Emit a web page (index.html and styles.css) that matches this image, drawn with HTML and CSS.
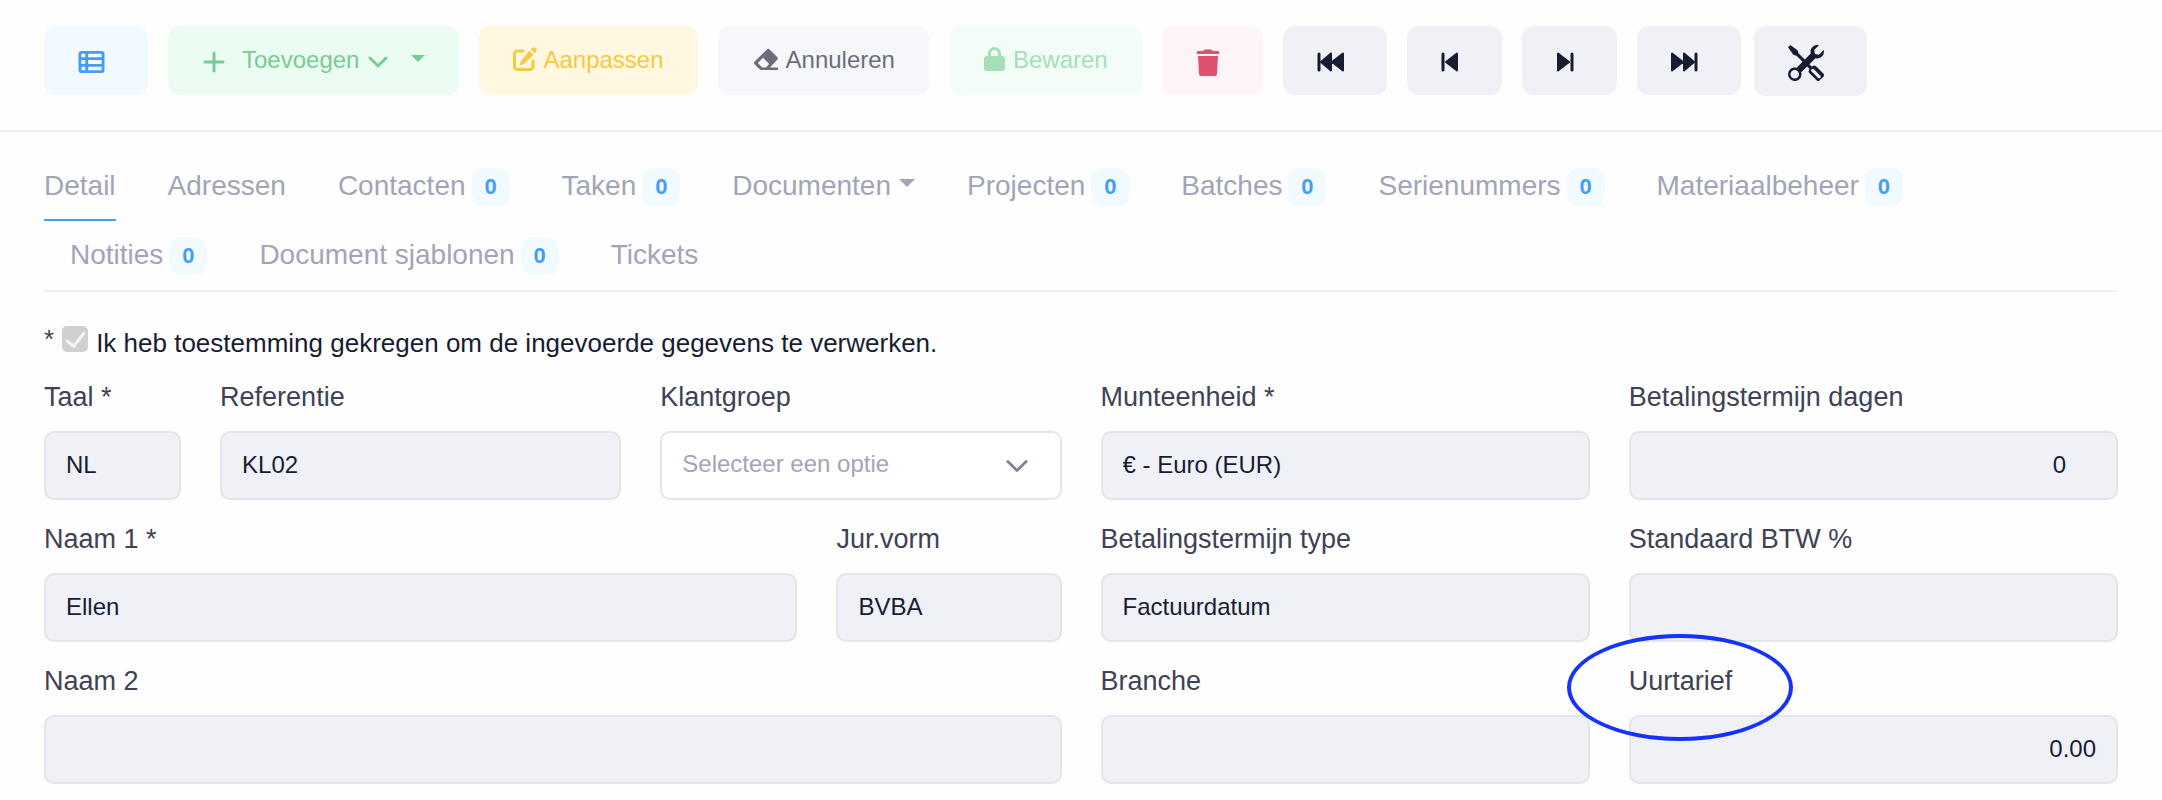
FILE: index.html
```html
<!DOCTYPE html>
<html lang="nl">
<head>
    <meta charset="UTF-8">
    <meta name="viewport" content="width=device-width, initial-scale=1.0">
    <title>Klant KL02</title>
    <link rel="stylesheet" href="styles.css">
</head>
<body>
    <header class="toolbar">
        <button type="button" class="btn btn-info" aria-label="Lijst">
            <svg class="icon icon-list" viewBox="0 0 28 24" fill="none" stroke="currentColor" stroke-width="3"><rect x="2" y="2" width="24" height="20" rx="2"/><path d="M2 8.500h24M2 15.500h24M9 2v20"/></svg>
        </button>
        <button type="button" class="btn btn-add">
            <svg class="icon icon-plus" viewBox="0 0 24 24" fill="none" stroke="currentColor" stroke-width="3" stroke-linecap="round"><path d="M12 3v18M3 12h18"/></svg>
            <span>Toevoegen</span>
            <svg class="icon icon-down" viewBox="0 0 20 14" fill="none" stroke="currentColor" stroke-width="3" stroke-linecap="round"><path d="M2 3l8 8 8-8"/></svg>
            <span class="caret"></span>
        </button>
        <button type="button" class="btn btn-edit">
            <svg class="icon icon-text" viewBox="0 0 24 24"><path fill="none" stroke="currentColor" stroke-width="3" stroke-linecap="round" d="M10 4H4.500A3 3 0 0 0 1.500 7v12.500a3 3 0 0 0 3 3H17a3 3 0 0 0 3-3V14"/><path fill="currentColor" d="M16.500 3.500l4 4-9 9q-2 1.500-4.800 1.800.3-2.800 1.800-4.800zM17.700 2.300l1-1a2.700 2.700 0 0 1 4 4l-1 1z"/></svg>
            <span>Aanpassen</span>
        </button>
        <button type="button" class="btn btn-cancel">
            <svg class="icon icon-text icon-eraser" viewBox="-2 0 28 24"><path fill="currentColor" fill-rule="evenodd" d="M12.800 2.400a2 2 0 0 1 2.800 0l7.600 7.600a2 2 0 0 1 0 2.800L16 20.500h7a1.200 1.200 0 0 1 0 2.500H7.500a3 3 0 0 1-2.100-.9L.7 17.400a2 2 0 0 1 0-2.800zM9 10.800l-5.200 5.200 4.500 4.500h3.600l3.300-3.500z"/></svg>
            <span>Annuleren</span>
        </button>
        <button type="button" class="btn btn-save" disabled>
            <svg class="icon icon-text" viewBox="0 0 24 24"><path fill="none" stroke="currentColor" stroke-width="3" d="M6.500 10V6.500a5 5 0 0 1 10 0V10"/><rect x="1" y="9" width="21" height="15" rx="3" fill="currentColor"/></svg>
            <span>Bewaren</span>
        </button>
        <button type="button" class="btn btn-delete" aria-label="Verwijderen">
            <svg class="icon icon-trash" viewBox="0 0 24 27" fill="currentColor"><path d="M2 2h5l1.500-1.500h7L17 2h5a1.500 1.500 0 0 1 0 3H2A1.500 1.500 0 0 1 2 2zM2 7h20l-1 17.500a2.500 2.500 0 0 1-2.500 2.500h-13A2.500 2.500 0 0 1 3 24.500z"/></svg>
        </button>
        <button type="button" class="btn btn-light" aria-label="Eerste">
            <svg class="icon icon-skip-2" viewBox="0 0 27 20"><path fill="currentColor" stroke="currentColor" stroke-width="2" stroke-linejoin="round" d="M14 1.500v17L4 10zM26 1.500v17L15 10z"/><path stroke="currentColor" stroke-width="3" stroke-linecap="round" d="M2 2v16"/></svg>
        </button>
        <button type="button" class="btn btn-light" aria-label="Vorige">
            <svg class="icon icon-skip-1" viewBox="0 0 18 20"><path fill="currentColor" stroke="currentColor" stroke-width="2" stroke-linejoin="round" d="M16 1.500v17L5 10z"/><path stroke="currentColor" stroke-width="3" stroke-linecap="round" d="M2 2v16"/></svg>
        </button>
        <button type="button" class="btn btn-light" aria-label="Volgende">
            <svg class="icon icon-skip-1" viewBox="0 0 18 20"><path fill="currentColor" stroke="currentColor" stroke-width="2" stroke-linejoin="round" d="M2 1.500v17L13 10z"/><path stroke="currentColor" stroke-width="3" stroke-linecap="round" d="M16 2v16"/></svg>
        </button>
        <button type="button" class="btn btn-light" aria-label="Laatste">
            <svg class="icon icon-skip-2" viewBox="0 0 27 20"><path fill="currentColor" stroke="currentColor" stroke-width="2" stroke-linejoin="round" d="M1 1.500v17L12 10zM13 1.500v17L23 10z"/><path stroke="currentColor" stroke-width="3" stroke-linecap="round" d="M25 2v16"/></svg>
        </button>
        <button type="button" class="btn btn-light btn-tools" aria-label="Extra">
            <svg class="icon icon-tools" viewBox="0 0 16 16" fill="currentColor"><path fill-rule="evenodd" d="M1 0 0 1l2.200 3.081a1 1 0 0 0 .815.419h.07a1 1 0 0 1 .708.293l2.675 2.675-2.617 2.654A3.003 3.003 0 0 0 0 13a3 3 0 1 0 5.878-.851l2.654-2.617.968.968-.305.914a1 1 0 0 0 .242 1.023l3.270 3.270a.997.997 0 0 0 1.414 0l1.586-1.586a.997.997 0 0 0 0-1.414l-3.270-3.270a1 1 0 0 0-1.023-.242L10.500 9.500l-.96-.96 2.680-2.643A3.005 3.005 0 0 0 16 3q0-.405-.102-.777l-2.140 2.141L12 4l-.364-1.757L13.777.102a3 3 0 0 0-3.675 3.680L7.462 6.460 4.793 3.793a1 1 0 0 1-.293-.707v-.071a1 1 0 0 0-.419-.814zM10.500 10.800a.7.7 0 0 1 1 0l2.800 2.800a.7.7 0 0 1-1 1l-2.800-2.800a.7.7 0 0 1 0-1zM3 11.100a1.900 1.900 0 1 1 0 3.800a1.900 1.900 0 1 1 0-3.800z"/><path stroke="currentColor" stroke-width="2" d="M5 11l6-6"/></svg>
        </button>
    </header>

    <main class="content">
        <nav>
            <ul class="tabs">
                <li><a href="#detail" class="active">Detail</a></li>
                <li><a href="#adressen">Adressen</a></li>
                <li><a href="#contacten">Contacten <span class="badge">0</span></a></li>
                <li><a href="#taken">Taken <span class="badge">0</span></a></li>
                <li><a href="#documenten">Documenten <span class="caret"></span></a></li>
                <li><a href="#projecten">Projecten <span class="badge">0</span></a></li>
                <li><a href="#batches">Batches <span class="badge">0</span></a></li>
                <li><a href="#serienummers">Serienummers <span class="badge">0</span></a></li>
                <li><a href="#materiaalbeheer">Materiaalbeheer <span class="badge">0</span></a></li>
                <li><a href="#notities">Notities <span class="badge">0</span></a></li>
                <li><a href="#sjablonen">Document sjablonen <span class="badge">0</span></a></li>
                <li><a href="#tickets">Tickets</a></li>
            </ul>
        </nav>

        <form>
            <div class="consent">
                <span class="required">*</span>
                <input type="checkbox" id="consent" checked disabled>
                <label for="consent">Ik heb toestemming gekregen om de ingevoerde gegevens te verwerken.</label>
            </div>

            <div class="fields">
                <div class="field span-2">
                    <label for="taal">Taal *</label>
                    <input type="text" id="taal" value="NL" disabled>
                </div>
                <div class="field span-5">
                    <label for="referentie">Referentie</label>
                    <input type="text" id="referentie" value="KL02" disabled>
                </div>
                <div class="field span-5">
                    <label for="klantgroep">Klantgroep</label>
                    <div class="select-wrap">
                        <select id="klantgroep">
                            <option>Selecteer een optie</option>
                        </select>
                        <svg class="select-arrow" viewBox="0 0 24 14" fill="none" stroke="currentColor" stroke-width="3" stroke-linecap="round" stroke-linejoin="round"><path d="M2 2l10 10L22 2"/></svg>
                    </div>
                </div>
                <div class="field span-6">
                    <label for="munteenheid">Munteenheid *</label>
                    <input type="text" id="munteenheid" value="€ - Euro (EUR)" disabled>
                </div>
                <div class="field span-6">
                    <label for="dagen">Betalingstermijn dagen</label>
                    <input type="text" id="dagen" class="number days" value="0" disabled>
                </div>

                <div class="field span-9">
                    <label for="naam1">Naam 1 *</label>
                    <input type="text" id="naam1" value="Ellen" disabled>
                </div>
                <div class="field span-3">
                    <label for="jurvorm">Jur.vorm</label>
                    <input type="text" id="jurvorm" value="BVBA" disabled>
                </div>
                <div class="field span-6">
                    <label for="termijntype">Betalingstermijn type</label>
                    <input type="text" id="termijntype" value="Factuurdatum" disabled>
                </div>
                <div class="field span-6">
                    <label for="btw">Standaard BTW %</label>
                    <input type="text" id="btw" disabled>
                </div>

                <div class="field span-12">
                    <label for="naam2">Naam 2</label>
                    <input type="text" id="naam2" disabled>
                </div>
                <div class="field span-6">
                    <label for="branche">Branche</label>
                    <input type="text" id="branche" disabled>
                </div>
                <div class="field span-6 marked">
                    <label for="uurtarief">Uurtarief</label>
                    <input type="text" id="uurtarief" class="number" value="0.00" disabled>
                </div>
            </div>
        </form>
    </main>
</body>
</html>
```
FILE: styles.css
```css
:root {
    --text-color: #181c32;
    --label-color: #3f4254;
    --muted-color: #a1a5b7;
    --primary-color: #459ef5;
    --primary-light: #f1faff;
    --field-color: #eff1f6;
    --border-color: #e2e5ec;
}

*, *::before, *::after {
    box-sizing: border-box;
}

body {
    margin: 0;
    background: #fefefe;
    color: var(--text-color);
    font-family: "Liberation Sans", Arial, sans-serif;
    font-size: 24px;
}

input, select, button {
    font: inherit;
}

.toolbar {
    display: flex;
    flex-wrap: wrap;
    align-items: flex-start;
    gap: 20px;
    padding: 26px 44px 34px;
    border-bottom: 2px solid var(--field-color);
}

.btn {
    display: flex;
    align-items: center;
    gap: 6px;
    height: 69px;
    padding: 0 34px;
    border: none;
    border-radius: 12px;
    line-height: 32px;
    cursor: pointer;
}

.btn > span {
    margin-bottom: 2px;
}

.icon {
    display: block;
    flex: none;
    width: 24px;
    height: 24px;
    margin-top: 3px;
}

.icon:only-child {
    margin-right: 9px;
}

.icon-text {
    margin: 0 0 3px;
}

.icon-list {
    width: 27px;
}

.icon-plus {
    margin-right: 10px;
}

.icon-down {
    width: 20px;
    height: 14px;
    margin-left: 3px;
}

.icon-eraser {
    width: 28px;
}

.icon-trash {
    height: 27px;
}

.icon-skip-1 {
    width: 18px;
    height: 20px;
}

.icon-skip-2 {
    width: 27px;
    height: 20px;
}

.icon-tools {
    width: 36px;
    height: 36px;
}

.btn-info {
    background: var(--primary-light);
    color: var(--primary-color);
}

.btn-add {
    background: #ebfcf3;
    color: #76cc92;
}

.btn-add .caret {
    margin: 0 0 4px 17px;
}

.btn-edit {
    background: #fff7e0;
    color: #f7c844;
}

.btn-cancel {
    background: #f6f7fa;
    color: #6c6d7c;
}

.btn-save {
    background: #f3fdf8;
    color: #a5dfb8;
    cursor: default;
}

.btn-delete {
    background: #fff4f8;
    color: #e0506f;
}

.btn-light {
    background: var(--field-color);
    color: var(--text-color);
}

.btn-tools {
    height: 70px;
    margin-left: -7px;
}

.caret {
    display: inline-block;
    border: 7px solid transparent;
    border-top-color: currentColor;
    border-bottom: 0;
}

.content {
    padding: 20px 44px 16px;
}

.tabs {
    display: flex;
    flex-wrap: wrap;
    margin: 0;
    padding: 0 26px 0 0;
    list-style: none;
    border-bottom: 2px solid var(--field-color);
    font-size: 28px;
}

.tabs a {
    display: flex;
    align-items: center;
    gap: 6px;
    height: 69px;
    margin: 0 26px;
    border-bottom: 2px solid transparent;
    color: var(--muted-color);
    text-decoration: none;
}

.tabs li:first-child a {
    margin-left: 0;
}

.tabs a.active {
    border-bottom-color: var(--primary-color);
}

.tabs .caret {
    margin: 0 0 6px 2px;
    border-width: 8px 8px 0;
}

.badge {
    min-width: 38px;
    height: 38px;
    margin-top: 3px;
    border-radius: 12px;
    background: var(--primary-light);
    color: var(--primary-color);
    font-size: 22px;
    font-weight: bold;
    line-height: 38px;
    text-align: center;
}

.consent {
    display: flex;
    align-items: center;
    gap: 8px;
    margin-top: 29px;
    font-size: 26px;
    line-height: 36px;
}

.consent .required {
    margin-bottom: 8px;
    color: var(--label-color);
}

.consent input {
    appearance: none;
    display: grid;
    place-items: center;
    width: 26px;
    height: 26px;
    margin: 0 0 8px;
    border-radius: 5px;
    background: #d0d0d0;
}

.consent input:checked::before {
    content: "";
    width: 11px;
    height: 19px;
    margin-bottom: 4px;
    border: solid #f4f4f4;
    border-width: 0 3px 3px 0;
    transform: rotate(38deg);
}

.fields {
    display: grid;
    grid-template-columns: repeat(24, minmax(0, 1fr));
    gap: 21px 39px;
    margin-top: 14px;
}

.field {
    position: relative;
    display: flex;
    flex-direction: column;
    gap: 16px;
}

.field label {
    color: var(--label-color);
    font-size: 27px;
    line-height: 36px;
}

.field input, .field select {
    width: 100%;
    height: 69px;
    padding: 0 20px 2px;
    border: 2px solid var(--border-color);
    border-radius: 10px;
    background: var(--field-color);
    color: var(--text-color);
}

.select-wrap {
    position: relative;
}

.field select {
    appearance: none;
    padding-bottom: 4px;
    background: #fff;
    color: var(--muted-color);
}

.select-arrow {
    position: absolute;
    right: 34px;
    top: 28px;
    width: 22px;
    height: 14px;
    color: #7e8299;
    pointer-events: none;
}

.field .number {
    text-align: right;
}

.field .days {
    padding-right: 50px;
}

/* blue ring around the hourly rate */
.marked::after {
    content: "";
    position: absolute;
    left: -62px;
    top: -29px;
    width: 226px;
    height: 107px;
    border: 4px solid #1433ff;
    border-radius: 50%;
    pointer-events: none;
}

.span-2 { grid-column: span 2; }
.span-3 { grid-column: span 3; }
.span-5 { grid-column: span 5; }
.span-6 { grid-column: span 6; }
.span-9 { grid-column: span 9; }
.span-12 { grid-column: span 12; }
```
